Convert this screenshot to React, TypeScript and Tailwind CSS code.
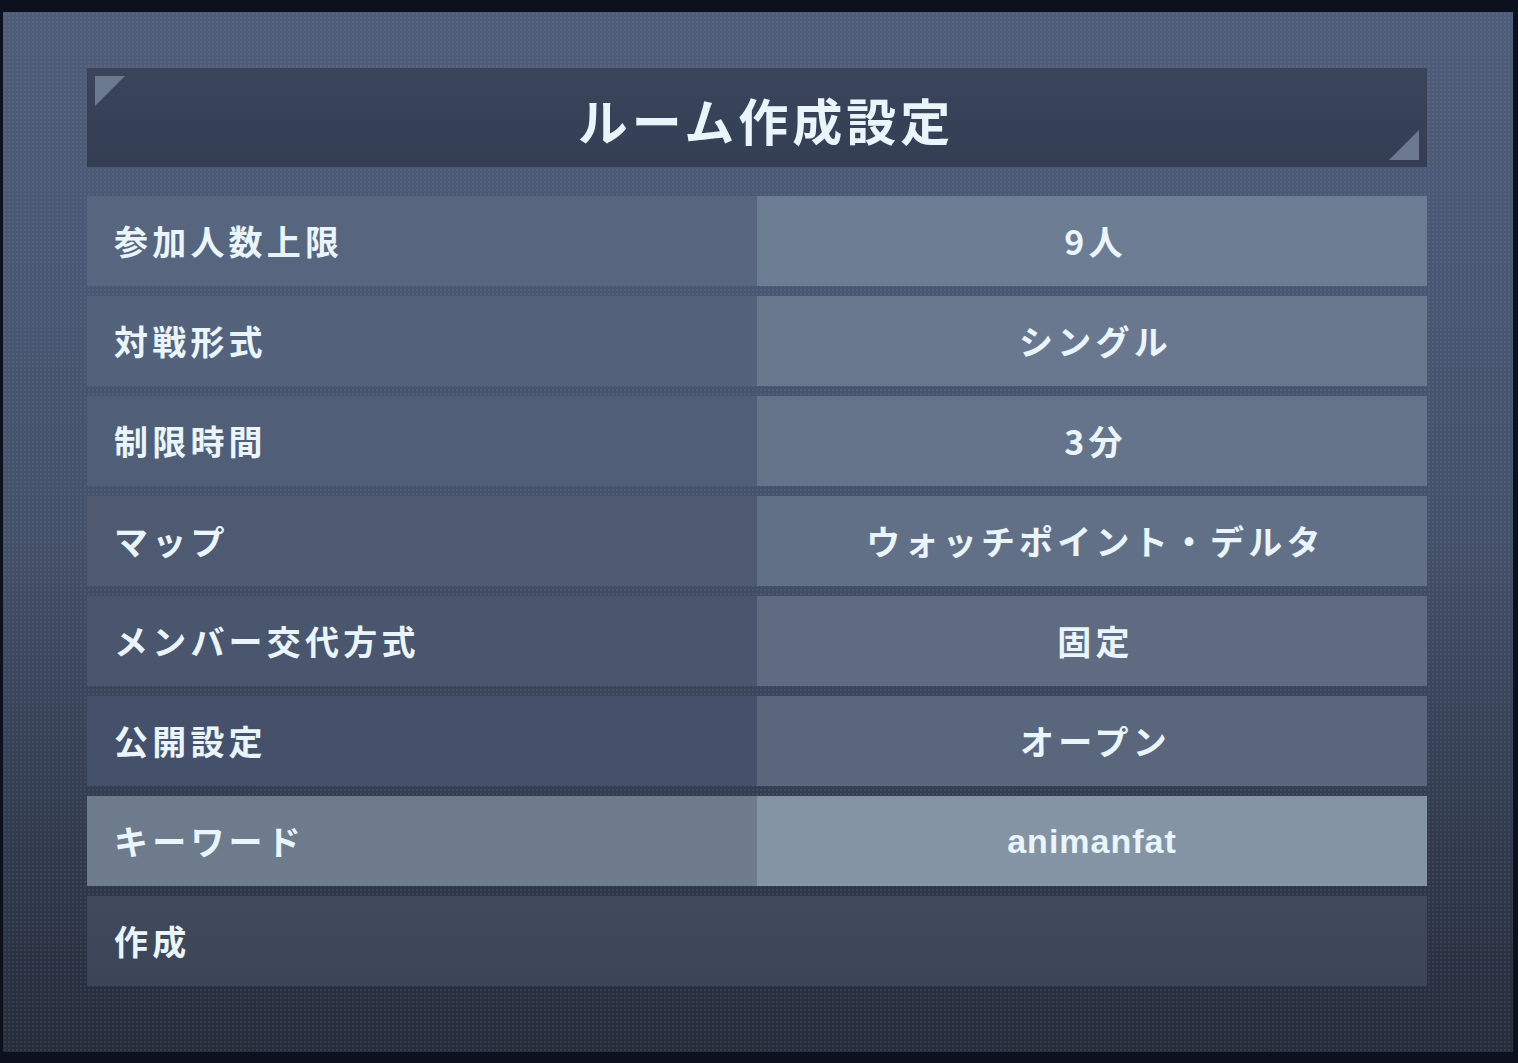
import React from "react";

const rows: { label: string; value: string; lb: string; vb: string; latin?: boolean }[] = [
  { label: "参加人数上限", value: "9人", lb: "bg-[#57657f]", vb: "bg-[#6c7c93]" },
  { label: "対戦形式", value: "シングル", lb: "bg-[#54627b]", vb: "bg-[#69788f]" },
  { label: "制限時間", value: "3分", lb: "bg-[#515e77]", vb: "bg-[#66748b]" },
  { label: "マップ", value: "ウォッチポイント・デルタ", lb: "bg-[#4d5a72]", vb: "bg-[#627087]" },
  { label: "メンバー交代方式", value: "固定", lb: "bg-[#4a566d]", vb: "bg-[#5e6b81]" },
  { label: "公開設定", value: "オープン", lb: "bg-[#45516a]", vb: "bg-[#59667c]" },
  { label: "キーワード", value: "animanfat", lb: "bg-[#6e7b8d]", vb: "bg-[#8494a4]", latin: true },
];

export default function App() {
  return (
    <div
      className="w-[1518px] h-[1063px] bg-[#0c111d] pt-[12px] pl-[3px] overflow-hidden text-[#e9f5fa]"
      style={{ fontFamily: '"Noto Sans CJK JP", "Noto Sans", sans-serif' }}
    >
      <div className="relative w-[1510px] h-[1040px] bg-gradient-to-b from-[#4f5d7a] via-[#44516a] to-[#252c3a] pt-[56px] pl-[84px] pr-[86px]">
        <div className="pointer-events-none absolute inset-0 opacity-[0.18] bg-[radial-gradient(circle,#8ea0bf_0.6px,transparent_1px)] bg-[length:4px_4px]" />
        <div className="relative h-[99px] bg-gradient-to-b from-[#3a455c] to-[#343e53] flex items-center justify-center">
          <div className="absolute left-[8px] top-[8px] w-0 h-0 border-t-[30px] border-t-[#6b7a8f] border-r-[30px] border-r-transparent" />
          <div className="absolute right-[8px] bottom-[7px] w-0 h-0 border-b-[30px] border-b-[#6b7a8f] border-l-[30px] border-l-transparent" />
          <h1 className="text-[50px] font-bold tracking-[4px] leading-none mt-[2px] ml-[18px]">ルーム作成設定</h1>
        </div>
        <div className="relative mt-[29px] flex flex-col gap-[10px]">
          {rows.map((r) => (
            <div key={r.label} className="flex h-[90px]">
              <div className={`w-[670px] ${r.lb} flex items-center pl-[27px]`}>
                <span className="text-[34px] font-bold tracking-[4.2px] leading-none">{r.label}</span>
              </div>
              <div className={`w-[670px] ${r.vb} flex items-center justify-center`}>
                {r.latin ? (
                  <span
                    className="text-[34px] font-bold tracking-[1px] leading-none"
                    style={{ fontFamily: '"Liberation Sans", Arial, sans-serif' }}
                  >
                    {r.value}
                  </span>
                ) : (
                  <span className="text-[34px] font-bold tracking-[4.2px] leading-none ml-[7px]">{r.value}</span>
                )}
              </div>
            </div>
          ))}
          <div className="flex h-[90px] bg-gradient-to-b from-[#414a5c] to-[#3c4556] items-center pl-[27px]">
            <span className="text-[34px] font-bold tracking-[4.2px] leading-none">作成</span>
          </div>
        </div>
      </div>
    </div>
  );
}
